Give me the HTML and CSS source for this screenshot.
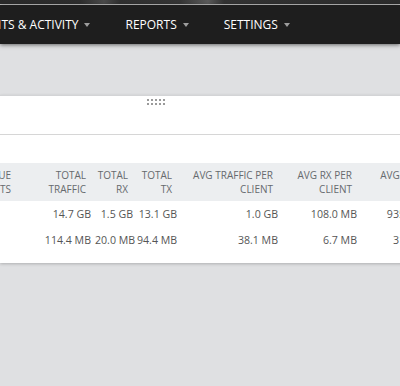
FILE: index.html
```html
<!DOCTYPE html>
<html>
<head>
<meta charset="utf-8">
<link rel="stylesheet" href="styles.css">
</head>
<body>
<div class="topstrip"></div>
<nav class="navbar">
  <ul class="nav">
    <li class="nav-item">CLIENTS &amp; ACTIVITY<span class="caret"></span></li>
    <li class="nav-item">REPORTS<span class="caret"></span></li>
    <li class="nav-item">SETTINGS<span class="caret"></span></li>
  </ul>
</nav>
<main class="content">
  <section class="panel">
    <div class="toolbar">
      <svg class="grip" width="18" height="6" viewBox="0 0 18 6">
        <g fill="#9a9a9a">
          <rect x="0" y="0" width="2" height="2"/><rect x="4" y="0" width="2" height="2"/><rect x="8" y="0" width="2" height="2"/><rect x="12" y="0" width="2" height="2"/><rect x="16" y="0" width="2" height="2"/>
          <rect x="0" y="4" width="2" height="2"/><rect x="4" y="4" width="2" height="2"/><rect x="8" y="4" width="2" height="2"/><rect x="12" y="4" width="2" height="2"/><rect x="16" y="4" width="2" height="2"/>
        </g>
      </svg>
    </div>
    <div class="panel-body">
      <table class="stats">
        <colgroup>
          <col class="c-unique"><col class="c-tt"><col class="c-rx"><col class="c-tx"><col class="c-atpc"><col class="c-arpc"><col class="c-atpc2"><col class="c-rest">
        </colgroup>
        <thead>
          <tr>
            <th>Unique<br>Clients</th>
            <th>Total<br>Traffic</th>
            <th>Total<br>RX</th>
            <th>Total<br>TX</th>
            <th>Avg Traffic per<br>Client</th>
            <th>Avg RX per<br>Client</th>
            <th class="th-last">Avg TX per<br>Client</th>
            <th></th>
          </tr>
        </thead>
        <tbody>
          <tr>
            <td></td><td>14.7 GB</td><td>1.5 GB</td><td>13.1 GB</td><td>1.0 GB</td><td>108.0 MB</td><td>935.3 MB</td><td></td>
          </tr>
          <tr>
            <td></td><td>114.4 MB</td><td>20.0 MB</td><td>94.4 MB</td><td>38.1 MB</td><td>6.7 MB</td><td>31.5 MB</td><td></td>
          </tr>
        </tbody>
      </table>
    </div>
  </section>
</main>
</body>
</html>
```

FILE: styles.css
```css
html, body {
  margin: 0;
  padding: 0;
}
body {
  background: #dfe0e2;
  font-family: "Open Sans", "DejaVu Sans", sans-serif;
  width: 400px;
  height: 386px;
  overflow: hidden;
}
.topstrip {
  height: 4px;
  background: linear-gradient(90deg, #2a2a2a 0%, #2e2e2e 20%, #4a4a4a 26%, #303030 30%, #353535 45%, #5a5a5a 52%, #333 56%, #2c2c2c 100%);
  border-bottom: 1px solid #bdbdbd;
}
.navbar {
  height: 39px;
  background: #1e1e1e;
  box-shadow: 0 1px 4px rgba(0, 0, 0, 0.55);
  position: relative;
  z-index: 1;
  overflow: hidden;
}
.nav {
  list-style: none;
  margin: 0 0 0 -49px;
  padding: 0;
  display: flex;
  height: 100%;
  white-space: nowrap;
}
.nav-item {
  display: flex;
  align-items: center;
  padding: 0 17.5px;
  color: #ffffff;
  font-size: 12px;
  line-height: 39px;
}
.caret {
  display: inline-block;
  width: 0;
  height: 0;
  margin-left: 6px;
  margin-top: 1px;
  border-left: 3.5px solid transparent;
  border-right: 3.5px solid transparent;
  border-top: 4px solid #9d9d9d;
}
.content {
  padding-top: 51px;
  overflow: hidden;
  padding-bottom: 6px;
}
.panel {
  width: 700px;
  background: #ffffff;
  border-top: 1px solid #d3d4d6;
  box-shadow: 0 1px 3px rgba(0, 0, 0, 0.22);
}
.toolbar {
  border-bottom: 1px solid #d6d6d6;
  padding-left: 147px;
  padding-top: 3px;
  box-sizing: border-box;
  height: 39px;
}
.grip {
  display: block;
}
.panel-body {
  padding-top: 28px;
  padding-bottom: 10px;
  overflow: hidden;
}
.stats {
  table-layout: fixed;
  border-collapse: collapse;
  margin-left: -62px;
  width: 760px;
}
.c-unique { width: 80px; }
.c-tt { width: 75px; }
.c-rx { width: 42px; }
.c-tx { width: 44px; }
.c-atpc { width: 101px; }
.c-arpc { width: 79px; }
.c-atpc2 { width: 76px; }
.stats thead tr {
  background: #eceef0;
}
.stats th {
  font-size: 10px;
  line-height: 14px;
  font-weight: 400;
  color: #666a6e;
  text-transform: uppercase;
  text-align: right;
  padding: 5px 7px 5px 2px;
  white-space: nowrap;
}
.stats th.th-last {
  padding-right: 1px;
}
.stats td {
  font-size: 10.6px;
  height: 26px;
  padding: 0 2px;
  color: #555555;
  text-align: right;
  vertical-align: middle;
  white-space: nowrap;
}
```
